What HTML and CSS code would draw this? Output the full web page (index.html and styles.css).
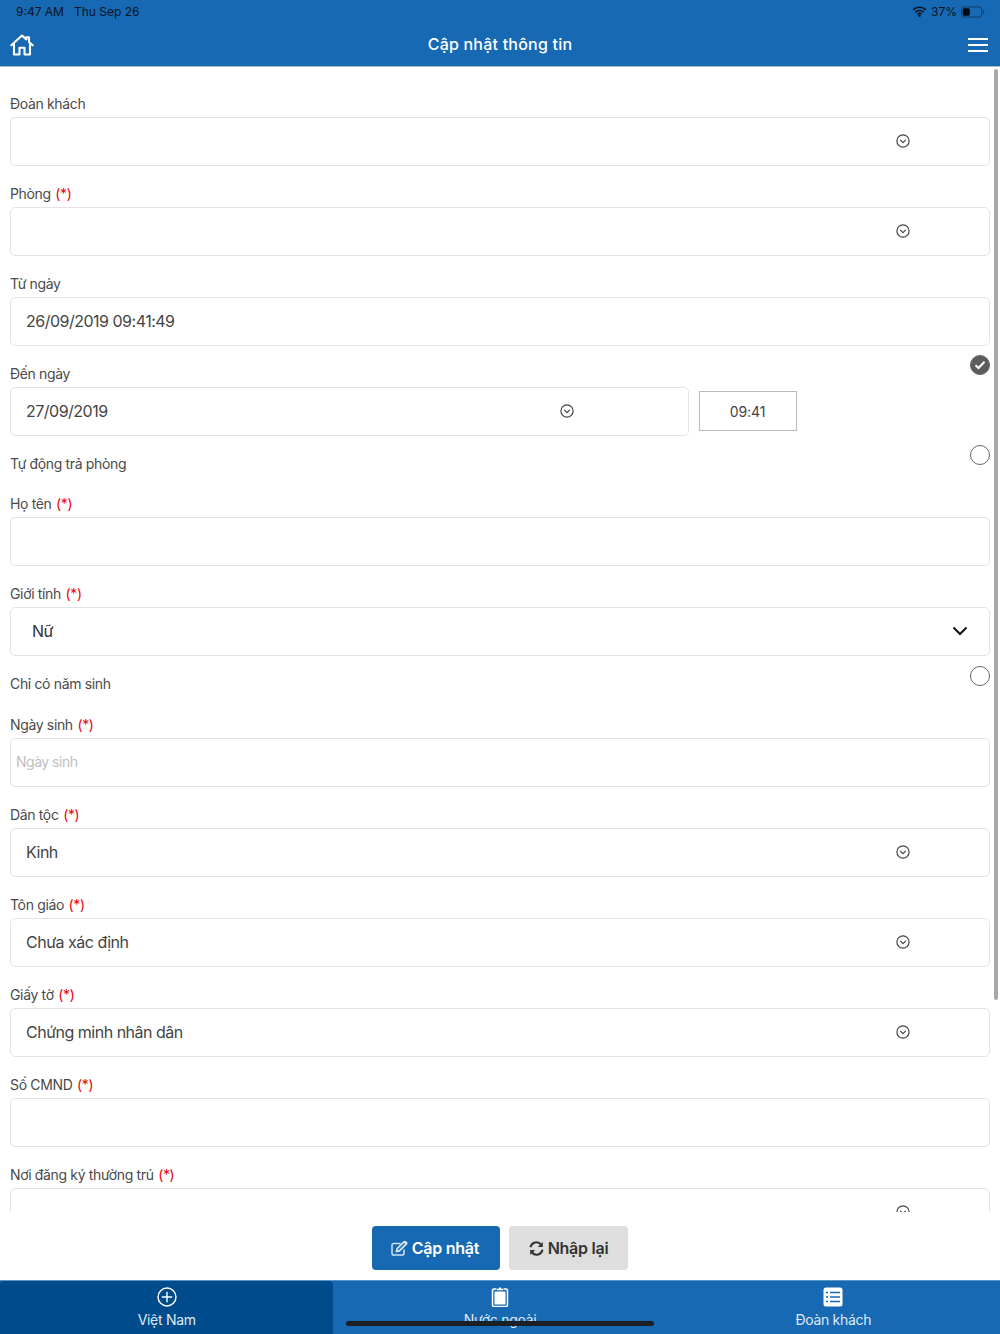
FILE: index.html
```html
<!DOCTYPE html>
<html lang="vi">
<head>
<meta charset="utf-8">
<title>Cập nhật thông tin</title>
<link rel="stylesheet" href="styles.css">
</head>
<body>
<div class="app">
  <header class="top">
    <div class="status">
      <div class="status-left"><span>9:47 AM</span><span>Thu Sep 26</span></div>
      <div class="status-right">
        <svg class="wifi" width="15" height="11" viewBox="0 0 16 12"><path d="M1 4.200a10 10 0 0 1 14 0M3.400 6.700a6.600 6.600 0 0 1 9.200 0M5.700 9a3.300 3.300 0 0 1 4.600 0" fill="none" stroke="#0a1420" stroke-width="1.700"/><circle cx="8" cy="10.600" r="1.300" fill="#0a1420"/></svg>
        <span class="pct">37%</span>
        <svg width="24" height="12" viewBox="0 0 26 12"><rect x="0.500" y="0.500" width="22" height="11" rx="3" fill="none" stroke="#0a1420" stroke-opacity=".55"/><rect x="2" y="2" width="7.500" height="8" rx="1.500" fill="#05090f"/><path d="M24 4v4c.8-.3 1.300-1 1.300-2s-.5-1.700-1.300-2z" fill="#0a1420" fill-opacity=".6"/></svg>
      </div>
    </div>
    <div class="nav">
      <svg class="home" width="24" height="22" viewBox="0 0 24 22"><path d="M1.300 11.300 12 1.500l4.300 3.900V3.300h2.700v4.600l3.700 3.400M4 10v10.500h5.500v-6.800h5v6.800H20V10" fill="none" stroke="#fff" stroke-width="2.100" stroke-linejoin="round" stroke-linecap="round"/></svg>
      <h1 class="title">Cập nhật thông tin</h1>
      <div class="burger"><i></i><i></i><i></i></div>
    </div>
  </header>

  <main class="form">
    <div class="field">
      <div class="label">Đoàn khách</div>
      <div class="box"><span></span><svg class="chev" width="14" height="14" viewBox="0 0 14 14"><use href="#c"/></svg></div>
    </div>
    <div class="field">
      <div class="label">Phòng <b>(*)</b></div>
      <div class="box"><span></span><svg class="chev" width="14" height="14" viewBox="0 0 14 14"><use href="#c"/></svg></div>
    </div>
    <div class="field">
      <div class="label">Từ ngày</div>
      <div class="box"><span>26/09/2019 09:41:49</span></div>
    </div>
    <div class="field">
      <div class="label label-radio">Đến ngày <span class="radio checked"><svg width="12" height="10" viewBox="0 0 12 10"><path d="M1.500 5.200 4.500 8l6-6.300" fill="none" stroke="#fff" stroke-width="2"/></svg></span></div>
      <div class="date-row">
        <div class="box box-date"><span>27/09/2019</span><svg class="chev" width="14" height="14" viewBox="0 0 14 14"><use href="#c"/></svg></div>
        <div class="time">09:41</div>
      </div>
    </div>
    <div class="toggle toggle-a">Tự động trả phòng <span class="radio"></span></div>
    <div class="field">
      <div class="label">Họ tên <b>(*)</b></div>
      <div class="box"></div>
    </div>
    <div class="field">
      <div class="label">Giới tính <b>(*)</b></div>
      <div class="box box-select"><span>Nữ</span><svg width="16" height="10" viewBox="0 0 16 10"><path d="M1.500 1.500 8 8l6.500-6.500" fill="none" stroke="#111" stroke-width="2"/></svg></div>
    </div>
    <div class="toggle toggle-b">Chỉ có năm sinh <span class="radio"></span></div>
    <div class="field">
      <div class="label">Ngày sinh <b>(*)</b></div>
      <div class="box box-ph"><span>Ngày sinh</span></div>
    </div>
    <div class="field">
      <div class="label">Dân tộc <b>(*)</b></div>
      <div class="box"><span>Kinh</span><svg class="chev" width="14" height="14" viewBox="0 0 14 14"><use href="#c"/></svg></div>
    </div>
    <div class="field">
      <div class="label">Tôn giáo <b>(*)</b></div>
      <div class="box"><span>Chưa xác định</span><svg class="chev" width="14" height="14" viewBox="0 0 14 14"><use href="#c"/></svg></div>
    </div>
    <div class="field">
      <div class="label">Giấy tờ <b>(*)</b></div>
      <div class="box"><span>Chứng minh nhân dân</span><svg class="chev" width="14" height="14" viewBox="0 0 14 14"><use href="#c"/></svg></div>
    </div>
    <div class="field">
      <div class="label">Số CMND <b>(*)</b></div>
      <div class="box"></div>
    </div>
    <div class="field">
      <div class="label">Nơi đăng ký thường trú <b>(*)</b></div>
      <div class="box"><span></span><svg class="chev" width="14" height="14" viewBox="0 0 14 14"><use href="#c"/></svg></div>
    </div>
  </main>
  <div class="scrollbar"></div>

  <div class="actions">
    <div class="btn btn-primary">
      <svg width="17" height="15" viewBox="0 0 17 15"><path d="M13 8.500v3.700a1.800 1.800 0 0 1-1.800 1.800H2.800A1.800 1.800 0 0 1 1 12.200V4.300a1.800 1.800 0 0 1 1.800-1.800h6.700" fill="none" stroke="#cfe2f3" stroke-width="1.500"/><path d="M5.500 10.500l.6-2.800 7-7 2.200 2.200-7 7zM14 .3l2.300 2.300" fill="none" stroke="#dceaf6" stroke-width="1.600"/></svg>
      Cập nhật
    </div>
    <div class="btn btn-gray">
      <svg width="15" height="15" viewBox="0 0 15 15"><path d="M1.500 6.300A6 6 0 0 1 12 3.500M13.500 8.700A6 6 0 0 1 3 11.500" fill="none" stroke="#333" stroke-width="2"/><path d="M13.800 1v5h-5zM1.200 14V9h5z" fill="#333"/></svg>
      Nhập lại
    </div>
  </div>

  <nav class="tabs">
    <div class="tab tab-active">
      <svg width="20" height="20" viewBox="0 0 20 20"><circle cx="10" cy="10" r="9" fill="none" stroke="#fff" stroke-width="1.400"/><path d="M10 4.800v10.400M4.800 10h10.400" stroke="#fff" stroke-width="1.400"/></svg>
      <span>Việt Nam</span>
    </div>
    <div class="tab">
      <svg width="18" height="20" viewBox="0 0 18 20"><path d="M5.500 2H3a1.500 1.500 0 0 0-1.500 1.500v14.500A1.500 1.500 0 0 0 3 19.500h12a1.500 1.500 0 0 0 1.500-1.500V3.500A1.500 1.500 0 0 0 15 2h-2.500" fill="none" stroke="#fff" stroke-width="1.500"/><path d="M6 3.200h6v-1.500h-1.600L9.800.4H8.200l-.6 1.300H6z" fill="#fff"/><rect x="3.500" y="4.500" width="11" height="13" fill="#fff"/></svg>
      <span>Nước ngoài</span>
    </div>
    <div class="tab">
      <svg width="20" height="20" viewBox="0 0 20 20"><rect x="0.500" y="0.500" width="19" height="19" rx="2.500" fill="#fff"/><path d="M3 5.500h2M3 10h2M3 14.500h2M7 5.500h10M7 10h10M7 14.500h10" stroke="#1769b3" stroke-width="1.500"/></svg>
      <span>Đoàn khách</span>
    </div>
  </nav>
  <div class="indicator"></div>
</div>
<svg class="defs" width="0" height="0"><symbol id="c" viewBox="0 0 14 14"><circle cx="7" cy="7" r="6.100" fill="none" stroke="#444" stroke-width="1.200"/><path d="M4.200 5.900 7 8.600l2.800-2.700" fill="none" stroke="#444" stroke-width="1.200"/></symbol></svg>
</body>
</html>
```
FILE: styles.css
```css
* { box-sizing: border-box; }
html, body { margin: 0; padding: 0; height: 1334px; overflow: hidden; background: #fff; }
body { font-family: Inter, "Noto Sans", sans-serif; color: #444; }
.defs { position: absolute; }
.app { position: relative; width: 1000px; height: 1334px; display: flex; flex-direction: column; }

.top { height: 67px; background: #1769b3; border-bottom: 1px solid #a9b8c6; flex: none; }
.status { height: 23px; display: flex; justify-content: space-between; align-items: center; padding: 0 15px 0 16px; font-size: 12px; color: #0a1420; }
.status-left { display: flex; gap: 10px; }
.status-right { display: flex; align-items: center; gap: 4px; }
.nav { height: 43px; display: flex; align-items: center; justify-content: space-between; padding: 0 12px 0 10px; position: relative; }
.title { position: absolute; left: 0; right: 0; top: 0; height: 42px; margin: 0; text-align: center; font-size: 16px; line-height: 42px; font-weight: 500; letter-spacing: .22px; color: #fff; }
.home { display: block; }
.burger { width: 20px; display: flex; flex-direction: column; gap: 4px; }
.burger i { display: block; height: 2px; background: #fff; }

.form { flex: 1; min-height: 0; overflow: hidden; padding: 23px 10px 0; }
.field { margin-bottom: 14px; }
.label { height: 27px; line-height: 28px; font-size: 14px; letter-spacing: -.35px; color: #4a4a4a; }
.label b { font-weight: 400; color: #e8000b; margin-left: 1px; }
.label-radio, .toggle { display: flex; justify-content: space-between; }
.radio { width: 20px; height: 20px; border-radius: 50%; border: 1px solid #666; background: #fff; margin-top: -5px; display: flex; align-items: center; justify-content: center; flex: none; }
.radio.checked { background: #5c5c5c; }
.toggle { height: 28px; line-height: 28px; font-size: 14px; letter-spacing: -.35px; color: #4a4a4a; }
.toggle-a { margin-bottom: 12px; }
.toggle-b { margin-bottom: 13px; }
.toggle-b .radio { margin-top: -4px; }

.box { height: 49px; border: 1px solid #e4e4e4; border-radius: 5px; display: flex; align-items: center; justify-content: space-between; padding: 0 79px 1px 15px; font-size: 16px; letter-spacing: -.5px; color: #444; background: #fff; }
.box-date { width: 679px; flex: none; padding-right: 114.500px; }
.box-select { padding: 0 21px 1px 21px; color: #333; }
.box-ph { padding: 0 79px 3px 5px; font-size: 14px; color: #c0c0c0; }
.chev { display: block; }
.date-row { display: flex; align-items: flex-start; gap: 10px; }
.time { width: 98px; height: 40px; margin-top: 4px; border: 1px solid #bbb; display: flex; align-items: center; justify-content: center; padding-right: 1px; font-size: 14px; letter-spacing: -.1px; color: #444; }

.scrollbar { position: absolute; left: 994px; top: 69px; width: 4px; height: 931px; background: #a8a8a8; border-radius: 2px; }

.actions { height: 68px; flex: none; display: flex; justify-content: center; align-items: flex-start; gap: 9px; padding-top: 14px; background: #fff; }
.btn { height: 44px; border-radius: 4px; display: flex; align-items: center; justify-content: center; gap: 4px; font-size: 16px; font-weight: 600; letter-spacing: -.25px; }
.btn-primary { width: 128px; padding-right: 2px; background: #1769b3; color: #fff; }
.btn-gray { width: 119px; background: #dedede; color: #333; }

.tabs { height: 54px; flex: none; display: flex; background: #1769b3; border-top: 1px solid #5a93c6; }
.tab { flex: 1; display: flex; flex-direction: column; align-items: center; padding-top: 6px; gap: 4px; font-size: 14px; line-height: 17px; letter-spacing: -.3px; color: #dfeaf4; }
.tab svg { display: block; }
.tab-active { background: #004b8b; border-radius: 4px 4px 0 0; }
.indicator { position: absolute; left: 346px; top: 1321px; width: 308px; height: 5px; border-radius: 3px; background: #1c1f24; }
```
